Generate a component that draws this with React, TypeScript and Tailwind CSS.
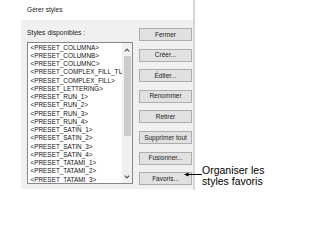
import React from "react";

const items = [
  "<PRESET_COLUMNA>",
  "<PRESET_COLUMNB>",
  "<PRESET_COLUMNC>",
  "<PRESET_COMPLEX_FILL_TUBE>",
  "<PRESET_COMPLEX_FILL>",
  "<PRESET_LETTERING>",
  "<PRESET_RUN_1>",
  "<PRESET_RUN_2>",
  "<PRESET_RUN_3>",
  "<PRESET_RUN_4>",
  "<PRESET_SATIN_1>",
  "<PRESET_SATIN_2>",
  "<PRESET_SATIN_3>",
  "<PRESET_SATIN_4>",
  "<PRESET_TATAMI_1>",
  "<PRESET_TATAMI_2>",
  "<PRESET_TATAMI_3>",
];

const buttons = [
  "Fermer",
  "Créer...",
  "Éditer...",
  "Renommer",
  "Retirer",
  "Supprimer tout",
  "Fusionner...",
  "Favoris...",
];

export default function App() {
  return (
    <div className="relative w-[295px] h-[207px] bg-white flex font-['Liberation_Sans',Arial,sans-serif] text-black overflow-hidden">
      <div className="w-[172px] ml-[21px] flex flex-col shrink-0">
        <div className="h-[20px] pl-[6px] flex items-center text-[6.6px] text-[#222]">
          Gérer styles
        </div>
        <div className="h-[169px] bg-[#f0f0f0] flex pl-[6px] pt-[8px]">
          <div className="w-[106px] flex flex-col shrink-0">
            <div className="h-[14px] pt-[1px] text-[6.8px] leading-[8px] text-[#222]">
              Styles disponibles :
            </div>
            <div className="h-[142px] border border-[#828790] bg-white flex">
              <div className="flex-1 min-w-0 pl-[2.5px] pt-[0.5px] overflow-hidden flex flex-col">
                {items.map((t) => (
                  <div
                    key={t}
                    className="h-[8.25px] leading-[8.25px] text-[6.4px] whitespace-nowrap text-[#111] shrink-0"
                  >
                    {t}
                  </div>
                ))}
              </div>
              <div className="w-[10px] bg-[#f0f0f0] flex flex-col items-center shrink-0">
                <div className="h-[13px] flex items-center justify-center">
                  <svg width="6" height="4" viewBox="0 0 6 4">
                    <path d="M0.8 3.3 L3 1 L5.2 3.3" fill="none" stroke="#555" strokeWidth="1.2" />
                  </svg>
                </div>
                <div className="h-[80px] w-[7px] bg-[#cdcdcd]" />
                <div className="flex-1" />
                <div className="h-[12px] flex items-center justify-center">
                  <svg width="6" height="4" viewBox="0 0 6 4">
                    <path d="M0.8 0.7 L3 3 L5.2 0.7" fill="none" stroke="#555" strokeWidth="1.2" />
                  </svg>
                </div>
              </div>
            </div>
          </div>
          <div className="ml-[6px] w-[53px] flex flex-col gap-[7.6px] shrink-0">
            {buttons.map((b) => (
              <div
                key={b}
                className="h-[13px] bg-[#e1e1e1] border border-[#adadad] text-[6.5px] text-[#222] flex items-center justify-center whitespace-nowrap"
              >
                {b}
              </div>
            ))}
          </div>
        </div>
      </div>
      <div className="w-[2px] h-[190px] bg-[#d6d6d6] shrink-0" />
      <div className="pl-[7px] pt-[164.5px] text-[10.5px] leading-[11px] text-black">
        <div>Organiser les</div>
        <div>styles favoris</div>
      </div>
      <svg
        className="absolute left-[184px] top-[171.5px]"
        width="18"
        height="5"
        viewBox="0 0 18 5"
      >
        <line x1="3" y1="2.5" x2="18" y2="2.5" stroke="#000" strokeWidth="1" />
        <path d="M0 2.5 L4.5 0.6 L4.5 4.4 Z" fill="#000" />
      </svg>
    </div>
  );
}
